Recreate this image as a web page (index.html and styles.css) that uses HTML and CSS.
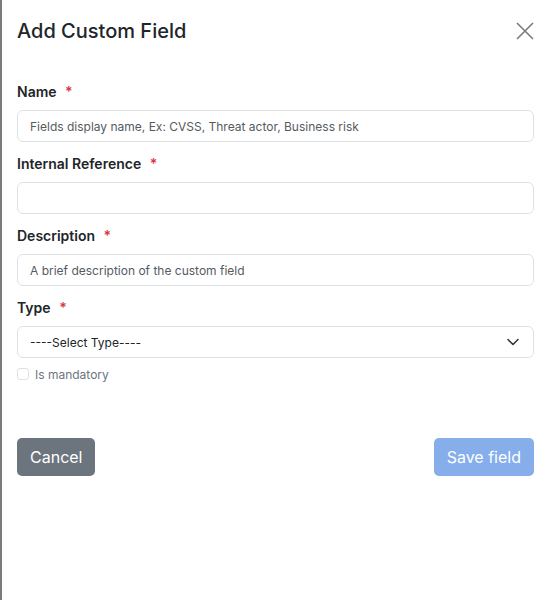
FILE: index.html
```html
<!DOCTYPE html>
<html>
<head>
<meta charset="utf-8">
<link rel="stylesheet" href="styles.css">
</head>
<body>
<div class="panel">
  <div class="header">
    <h1 class="title">Add Custom Field</h1>
    <button class="close" aria-label="Close">
      <svg width="18" height="18" viewBox="0 0 18 18"><path d="M1 1L17 17M17 1L1 17" stroke="#7a7a7a" stroke-width="1.6" fill="none"/></svg>
    </button>
  </div>
  <form class="form">
    <div class="field">
      <label class="label">Name <span class="req">*</span></label>
      <input class="input" type="text" placeholder="Fields display name, Ex: CVSS, Threat actor, Business risk">
    </div>
    <div class="field">
      <label class="label">Internal Reference <span class="req">*</span></label>
      <input class="input" type="text">
    </div>
    <div class="field">
      <label class="label">Description <span class="req">*</span></label>
      <input class="input" type="text" placeholder="A brief description of the custom field">
    </div>
    <div class="field">
      <label class="label">Type <span class="req">*</span></label>
      <div class="select">
        <span>----Select Type----</span>
        <svg width="12" height="8" viewBox="0 0 12 8"><path d="M1 1.5L6 6.5L11 1.5" stroke="#343a40" stroke-width="1.6" fill="none" stroke-linecap="round" stroke-linejoin="round"/></svg>
      </div>
    </div>
    <label class="check"><span class="box"></span>Is mandatory</label>
    <div class="actions">
      <button type="button" class="btn btn-cancel">Cancel</button>
      <button type="button" class="btn btn-save">Save field</button>
    </div>
  </form>
</div>
</body>
</html>
```
FILE: styles.css
```css
html, body {
  margin: 0;
  padding: 0;
  height: 100%;
  background: #fff;
}
body {
  font-family: Inter, "Liberation Sans", sans-serif;
  color: #212529;
  border-left: 2px solid #7a7a7a;
  box-sizing: border-box;
}
.panel {
  padding: 0 16px 0 15px;
}
.header {
  display: flex;
  align-items: center;
  justify-content: space-between;
  height: 62px;
}
.title {
  margin: 0;
  font-size: 20px;
  font-weight: 500;
  letter-spacing: 0;
}
.close {
  border: 0;
  background: none;
  padding: 0;
  margin-right: 0;
  width: 18px;
  height: 18px;
  display: flex;
}
.form {
  display: flex;
  flex-direction: column;
  padding-top: 19px;
}
.field {
  display: flex;
  flex-direction: column;
  margin-bottom: 11px;
}
.label {
  font-size: 14px;
  font-weight: 600;
  line-height: 21px;
  margin-bottom: 8px;
}
.req {
  color: #dc3545;
  margin-left: 5px;
}
.input, .select {
  box-sizing: border-box;
  height: 32px;
  border: 1px solid #dee2e6;
  border-radius: 6px;
  padding: 0 12px;
  font-family: inherit;
  font-size: 12px;
  color: #212529;
  width: 100%;
  outline: none;
}
.input::placeholder {
  color: #555b61;
}
.select {
  display: flex;
  align-items: center;
  justify-content: space-between;
  padding-right: 14px;
}
.check {
  display: flex;
  align-items: center;
  gap: 6px;
  font-size: 12px;
  color: #6c757d;
  margin-top: -4px;
  height: 18px;
}
.box {
  width: 10px;
  height: 10px;
  border: 1px solid #dee2e6;
  border-radius: 3px;
}
.actions {
  display: flex;
  justify-content: space-between;
  margin-top: 55px;
}
.btn {
  font-family: inherit;
  font-size: 16px;
  color: #fff;
  border: 0;
  border-radius: 5px;
  height: 38px;
  padding: 0 13px;
}
.btn-cancel {
  background: #6c757d;
}
.btn-save {
  background: #85aeeb;
}
```
